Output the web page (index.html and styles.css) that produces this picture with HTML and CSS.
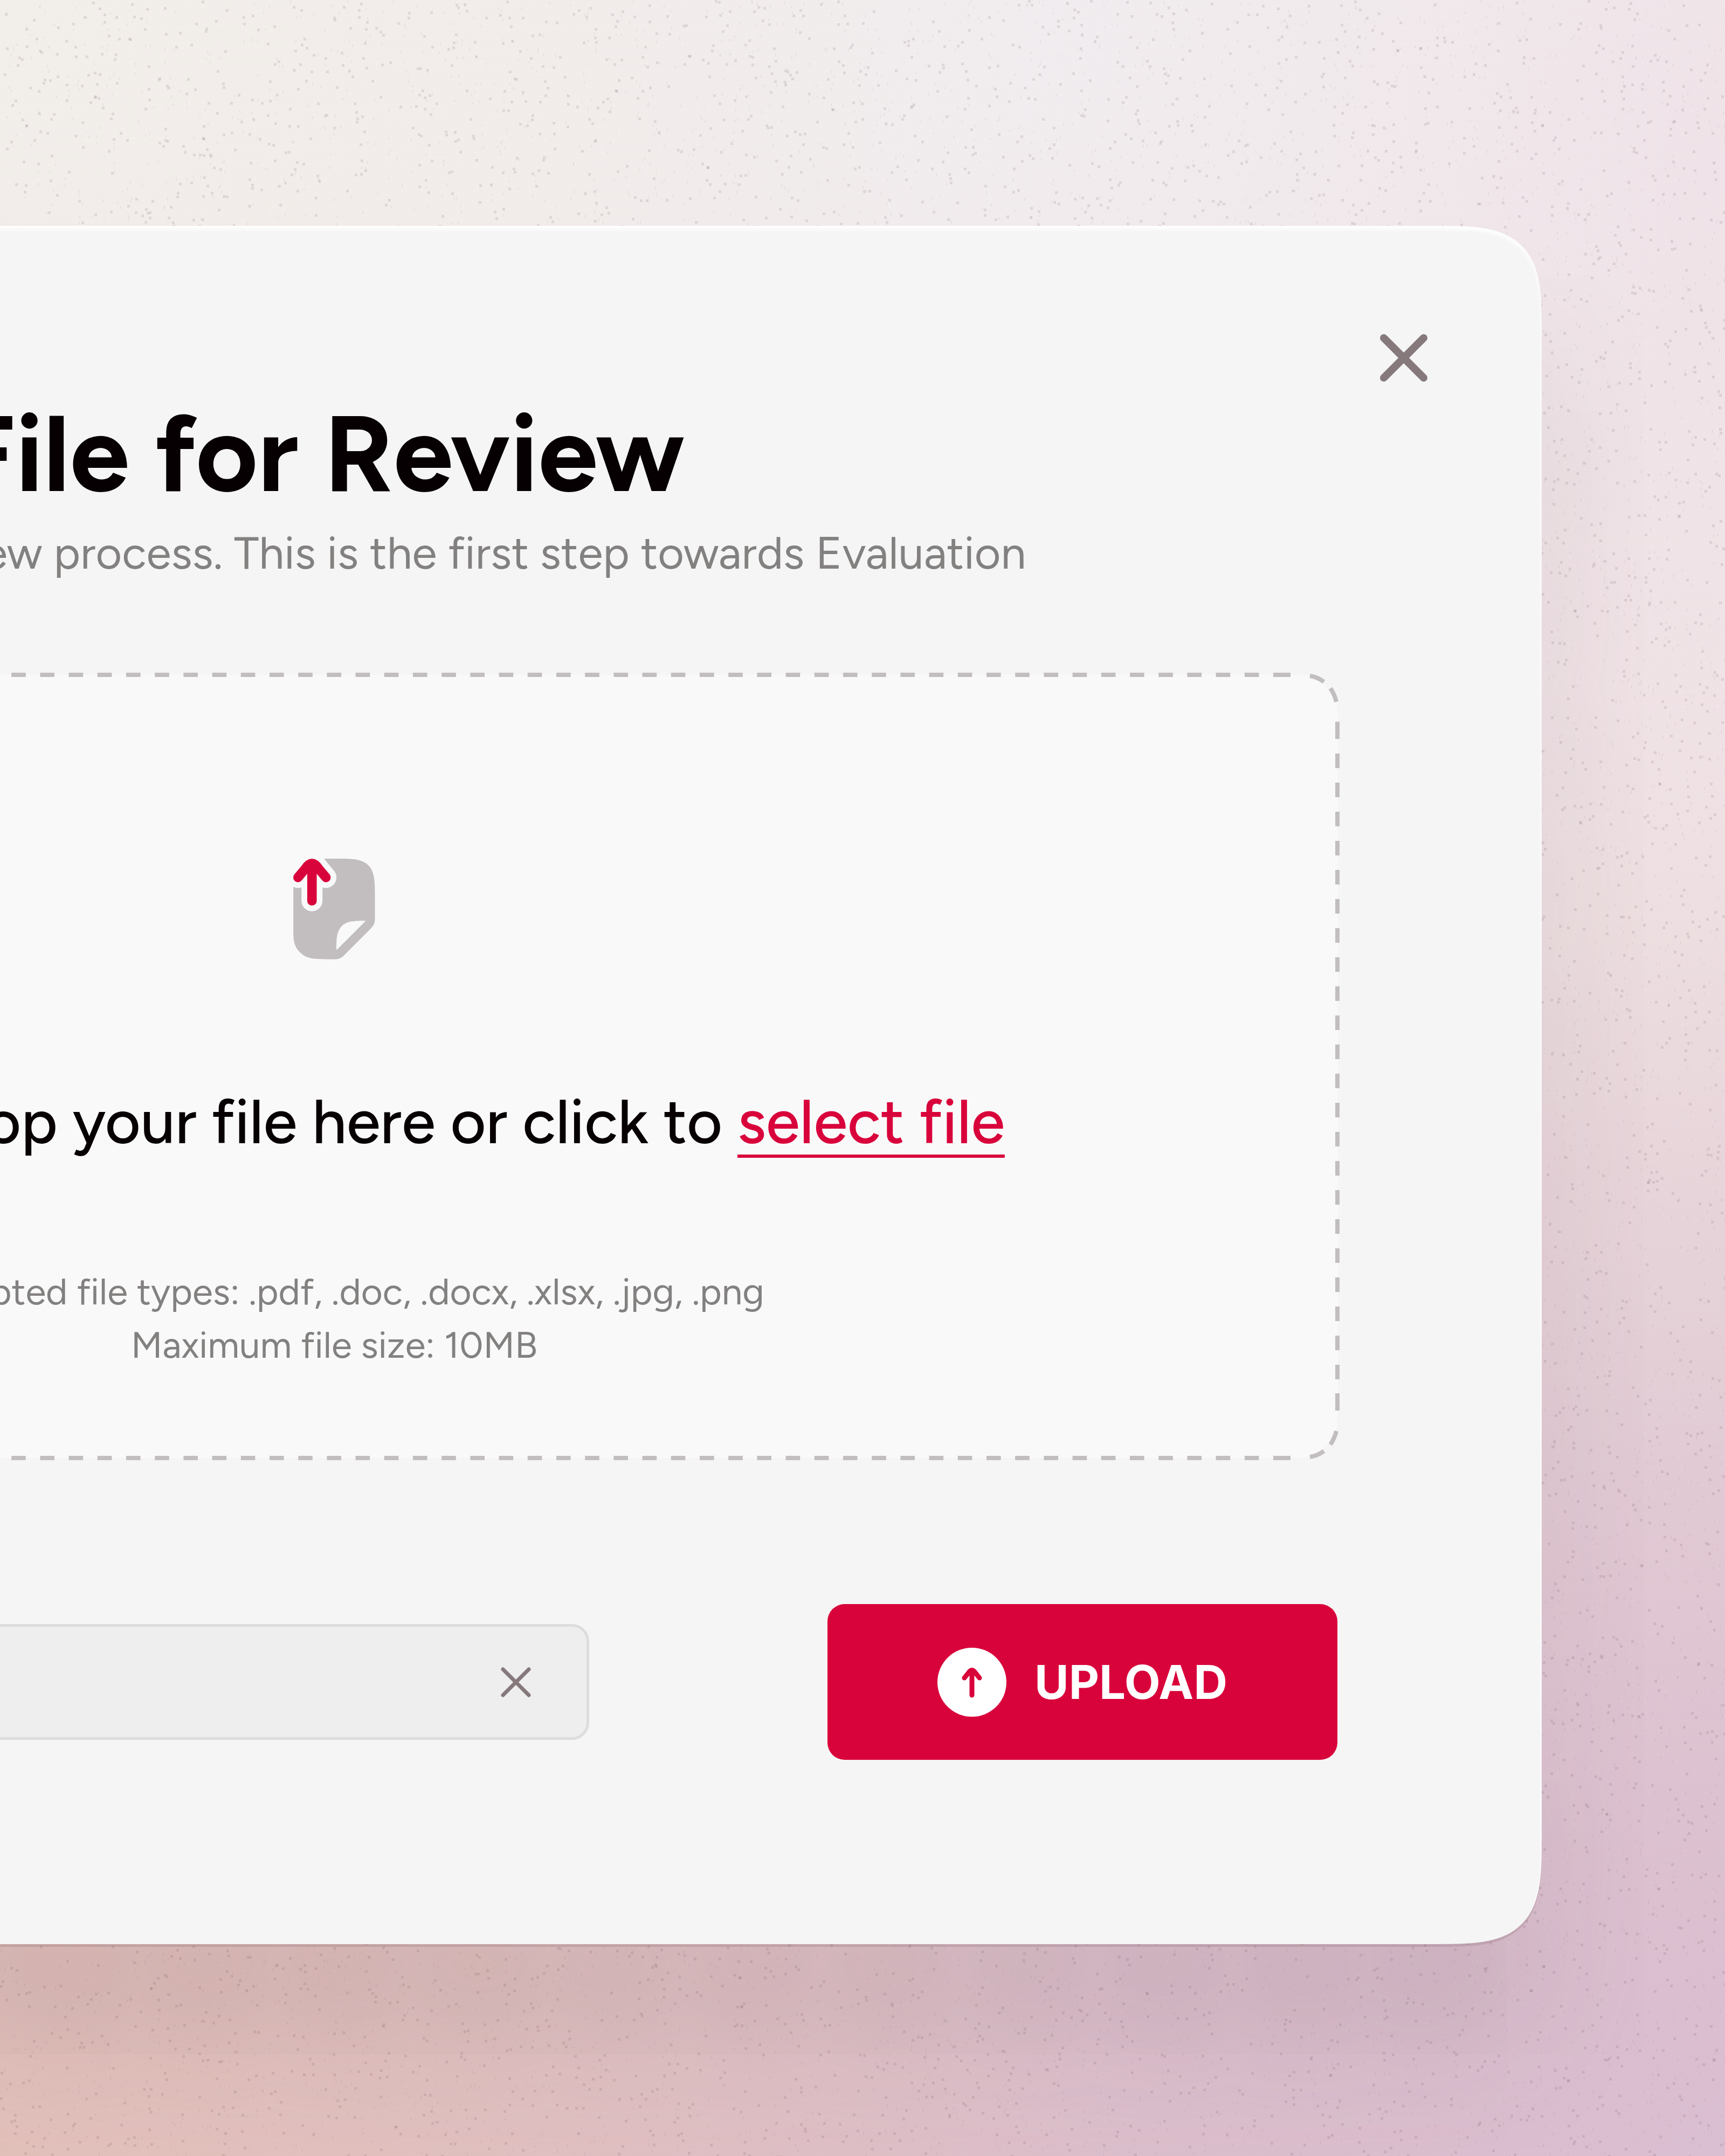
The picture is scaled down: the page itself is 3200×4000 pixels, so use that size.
FILE: index.html
```
<!DOCTYPE html>
<html lang="en">
<head>
    <meta charset="UTF-8">
    <meta name="viewport" content="width=device-width, initial-scale=1.0">
    <title>Upload Your File for Review</title>
    <link rel="stylesheet" href="styles.css">
</head>
<body>
    <canvas id="speckles" class="speckles" aria-hidden="true"></canvas>

    <main class="modal" role="dialog" aria-labelledby="modal-title">
        <button type="button" class="close" aria-label="Close">
            <svg viewBox="0 0 96 96">
                <path d="M11 11 85 85M85 11 11 85"/>
            </svg>
        </button>

        <header class="modal-header">
            <h1 id="modal-title">Upload Your File for Review</h1>
            <p>Submit your file to open the review process. This is the first step towards Evaluation</p>
        </header>

        <!-- Drop area -->
        <section class="dropzone">
            <svg class="dashes" aria-hidden="true">
                <svg x="100%" y="0" overflow="visible">
                    <path d="M-87 0h-32"/>
                    <path d="M-145.6 0h-3400" stroke-dasharray="26.6"/>
                    <path d="M-51 2Q-37 4-25 13M-13 25Q-5 37-2 50"/>
                    <path d="M0 87v32M0 1333v32"/>
                    <path d="M0 146v1170" stroke-dasharray="27"/>
                </svg>
                <svg x="100%" y="100%" overflow="visible">
                    <path d="M-87 0h-32"/>
                    <path d="M-145.6 0h-3400" stroke-dasharray="26.6"/>
                    <path d="M-51-2Q-37-4-25-13M-13-25Q-5-37-2-50"/>
                </svg>
            </svg>

            <svg class="file-icon" viewBox="133 100 456 562" aria-hidden="true">
                <path fill="#c2bebf" d="M133 240 237 150 300 100H390C460 100 503 103 535 124C583 155 588 210 588 300V430C588 466 578 478 556 499L430 625C410 645 397 661 365 661H330C240 661 205 657 170 622C133 585 133 550 133 480Z"/>
                <path fill="#f9f9f9" d="M530 446C536 446 536 448 532 452L382 602C375 609 373 610 373 602C373 550 374 514 398 482C424 449 468 446 530 446Z"/>
                <g fill="none" stroke-linecap="round" stroke-linejoin="round">
                    <path stroke="#f9f9f9" stroke-width="117" d="M159 205 200 156Q237 99 274 156L315 205M237 140V335"/>
                    <path stroke="#d9033b" stroke-width="53" d="M159 205 200 156Q237 99 274 156L315 205M237 140V335"/>
                </g>
            </svg>

            <p class="drop-text">Drag and drop your file here or click to <a href="#">select file</a></p>
            <p class="hint">Accepted file types: .pdf, .doc, .docx, .xlsx, .jpg, .png<br>Maximum file size: 10MB</p>
        </section>

        <!-- Selected file and upload button -->
        <div class="actions">
            <div class="file-chip">
                <button type="button" class="remove" aria-label="Remove file">
                    <svg viewBox="0 0 60 60">
                        <path d="M6 6 54 54M54 6 6 54"/>
                    </svg>
                </button>
            </div>
            <button type="button" class="upload">
                <svg viewBox="0 0 128 128" aria-hidden="true">
                    <circle cx="64" cy="64" r="64" fill="#fff" stroke="none"/>
                    <path d="M50 56 58 46Q64 37 70 46L78 56M64 43V88"/>
                </svg>
                UPLOAD
            </button>
        </div>
    </main>

    <script>
        // Speckled paper texture behind the modal
        const canvas = document.getElementById('speckles');

        function drawSpeckles() {
            const w = canvas.width = window.innerWidth;
            const h = canvas.height = window.innerHeight;
            const ctx = canvas.getContext('2d');
            let seed = 7;
            const rand = () => {
                seed = (seed * 16807) % 2147483647;
                return seed / 2147483647;
            };
            const count = Math.round(w * h / 1200);
            for (let i = 0; i < count; i++) {
                ctx.fillStyle = 'rgba(70, 50, 55, 0.11)';
                ctx.fillRect(Math.floor(rand() * w), Math.floor(rand() * h), 5, 5);
                ctx.fillStyle = 'rgba(70, 50, 55, 0.06)';
                ctx.fillRect(Math.floor(rand() * w), Math.floor(rand() * h), 2, 5);
            }
        }

        drawSpeckles();
        window.addEventListener('resize', drawSpeckles);
    </script>
</body>
</html>
```
FILE: styles.css
```
* {
    box-sizing: border-box;
}

body {
    margin: 0;
    min-height: 100vh;
    padding: 419px 340px 393px 0;
    overflow: hidden;
    font-family: Figtree, Lato, sans-serif;
    color: #070002;
    background:
        radial-gradient(circle at 0 0, #f2eeea, transparent 40%),
        radial-gradient(circle at 60% 2%, #f1ecef, transparent 30%),
        radial-gradient(circle at 100% 8%, #efe2e8, transparent 30%),
        radial-gradient(circle at 0 100%, #e3c1bb, transparent 40%),
        radial-gradient(circle at 100% 100%, #dabed1, transparent 45%),
        linear-gradient(#f1ebea, #f0e3e5 30%, #e9d8da 62%, #dfc0c7);
}

.speckles {
    position: fixed;
    inset: 0;
    z-index: -1;
    width: 100%;
    height: 100%;
}

button {
    padding: 0;
    border: none;
    background: none;
    cursor: pointer;
}

svg {
    display: block;
    flex-shrink: 0;
}

/* The modal bleeds off the left edge of the page */
.modal {
    position: relative;
    margin-left: -1620px;
    padding: 303px 379px 342px;
    background: #f5f5f5;
    border-radius: 128px;
    box-shadow:
        inset 0 6px 8px #fff,
        0 5px 0 rgba(90, 50, 60, 0.14),
        0 200px 340px rgba(90, 65, 70, 0.14);
}

@supports (corner-shape: squircle) {
    .modal {
        border-radius: 200px;
        corner-shape: superellipse(1.75);
    }
}

.close {
    position: absolute;
    top: 197px;
    right: 208px;
}

.close svg {
    width: 96px;
    fill: none;
    stroke: #85797c;
    stroke-width: 14;
    stroke-linecap: round;
}

.modal-header h1 {
    margin: 0 0 13px;
    font-size: 199px;
    font-weight: 700;
    line-height: 240px;
    white-space: nowrap;
}

.modal-header p {
    margin: 0;
    font-size: 84px;
    line-height: 102px;
    color: #838180;
    white-space: nowrap;
}

.dropzone {
    position: relative;
    display: flex;
    flex-direction: column;
    align-items: center;
    margin-top: 175px;
    padding: 341px 0 161px;
    background: #f9f9f9;
    border-radius: 72px;
}

.dashes {
    position: absolute;
    inset: 0;
    width: 100%;
    height: 100%;
    overflow: visible;
    fill: none;
    stroke: #c2bebf;
    stroke-width: 8;
    pointer-events: none;
}

.file-icon {
    width: 152px;
    height: 187px;
    overflow: visible;
}

.drop-text {
    margin: 232px 0 194px;
    font-size: 114px;
    font-weight: 500;
    line-height: 140px;
    white-space: nowrap;
}

.drop-text a {
    color: #d9033b;
    text-decoration: underline;
    text-decoration-thickness: 6px;
    text-decoration-skip-ink: none;
    text-underline-offset: 21px;
}

.hint {
    margin: 0;
    font-size: 69px;
    line-height: 99px;
    text-align: center;
    color: #838180;
}

.actions {
    display: flex;
    align-items: center;
    gap: 442px;
    margin-top: 271px;
}

.file-chip {
    flex: 1;
    display: flex;
    align-items: center;
    justify-content: flex-end;
    height: 215px;
    padding-right: 101px;
    background: #eee;
    border: 5px solid #ddd;
    border-radius: 32px;
}

.remove svg {
    width: 60px;
    fill: none;
    stroke: #85797c;
    stroke-width: 7;
    stroke-linecap: round;
}

.upload {
    display: flex;
    align-items: center;
    gap: 52px;
    height: 289px;
    padding: 0 204px;
    font-family: Inter, sans-serif;
    font-size: 87px;
    font-weight: 700;
    color: #fff;
    background: #d9033b;
    border-radius: 32px;
}

.upload svg {
    width: 128px;
    fill: none;
    stroke: #d9033b;
    stroke-width: 9;
    stroke-linecap: round;
}
```
